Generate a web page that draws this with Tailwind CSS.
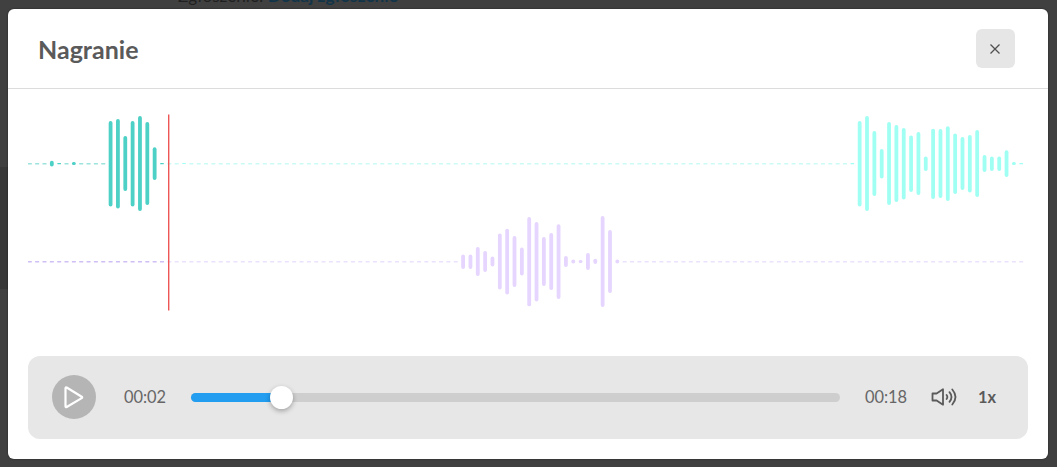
<!DOCTYPE html>
<html lang="pl">
<head>
    <meta charset="UTF-8">
    <meta name="viewport" content="width=device-width, initial-scale=1.0">
    <title>Nagranie</title>
    <script src="https://cdn.jsdelivr.net/npm/@tailwindcss/browser@4"></script>
</head>
<body class="bg-[#404040] font-[Lato,sans-serif] text-[#5a5a5a] overflow-hidden">
    <div class="relative h-[467px] w-[1057px] overflow-hidden">
        <!-- page behind the modal -->
        <div class="absolute left-0 top-[167px] w-2 h-[122px] bg-[#383838]"></div>
        <p class="absolute left-[178px] -top-[14px] text-[17.2px] leading-5 text-[#202020] whitespace-nowrap">Zgłoszenie: <b class="text-[#123448]">Dodaj zgłoszenie</b></p>

        <div class="relative mt-[9px] ml-2 w-[1040px] h-[450px] bg-white rounded-md flex flex-col shadow-[0_0_2px_rgba(0,0,0,0.5)]">
            <header class="h-20 shrink-0 border-b border-[#dcdcdc] flex items-center justify-between pl-[30px] pr-[33px]">
                <h1 class="text-[25px] font-bold pt-[2px]">Nagranie</h1>
                <button class="w-[39px] h-[39px] rounded-md bg-[#e6e6e6] flex items-center justify-center">
                    <svg class="mr-px" width="10" height="10" viewBox="0 0 10 10" stroke="#505050" stroke-width="1.3"><path d="M.5.5l9 9M9.500.5l-9 9"/></svg>
                </button>
            </header>

            <main class="px-5 pt-[25px]">
                <svg id="wave" width="1000" height="198" viewBox="28 114 1000 198" fill="none"></svg>
            </main>

            <footer class="mx-5 mt-auto mb-5 h-[83px] rounded-xl bg-[#e7e7e7] flex items-center pl-6 pr-8 pb-px">
                <button class="w-11 h-11 rounded-full bg-[#b5b5b5] flex items-center justify-center">
                    <svg width="44" height="44" viewBox="0 0 44 44" fill="none" stroke="#fff" stroke-width="2.2" stroke-linejoin="round"><path d="M13.500 13.200v18.100q0 1.300 1.200.7l15-8.900q1-.7 0-1.400l-15-9.200q-1.200-.6-1.200.7z"/></svg>
                </button>
                <span class="ml-7 w-[67px] text-[16.4px] text-[#666] pt-px">00:02</span>
                <div class="relative w-[649px] h-[9px] rounded-full bg-[#cecece]">
                    <div class="h-[9px] rounded-full bg-[#229df0]" style="width: 14%"></div>
                    <div class="absolute left-[79px] -top-[7px] w-[23px] h-[23px] rounded-full bg-white shadow-[0_2px_5px_rgba(0,0,0,0.3)]"></div>
                </div>
                <span class="ml-[25px] w-[66px] text-[16.4px] text-[#666] pt-px">00:18</span>
                <svg width="26" height="18" viewBox="0 0 26 18" fill="none" stroke="#5a5a5a" stroke-width="1.8" stroke-linejoin="round" stroke-linecap="round">
                    <path d="M1.500 5.500H5.600L12 1.300V16.700L5.600 12.500H1.500Z"/>
                    <path d="M15.600 7q1.500 2 0 4M18.500 4.200q4 4.800 0 9.600M21.300 1.500q6.400 7.500 0 15"/>
                </svg>
                <span class="ml-[21px] text-[16.4px] font-bold pt-px">1x</span>
            </footer>
        </div>
    </div>

    <script>
        const wave = document.getElementById('wave');
        const STEP = 7.344;
        const START = 29.8;
        const PLAYHEAD = 168.5;

        // slot index: [top, bottom]
        const client = {
            3: [160.8, 166.5], 4: [163, 164.3], 6: [162, 165],
            11: [121, 206.5], 12: [119, 208.5], 13: [136, 191], 14: [121, 206.5],
            15: [116, 211], 16: [122, 205], 17: [147.3, 180], 18: [163, 164.3], 21: [163, 164],
            112: [163, 164.3], 113: [121, 206.5], 114: [116, 211], 115: [131, 196], 116: [149, 178.5],
            117: [122, 205], 118: [125, 202], 119: [128, 199.5], 120: [135.5, 192], 121: [132, 195],
            122: [156.5, 171], 123: [128.7, 199], 124: [129, 198], 125: [126.3, 201], 126: [133.5, 194],
            127: [137, 190], 128: [135, 192.5], 129: [130, 197], 130: [155, 172], 131: [156.5, 171],
            132: [156.5, 171], 133: [150.3, 177], 134: [162, 165], 135: [163, 164.3],
        };
        const agent = {
            59: [254.5, 269], 60: [254.5, 269], 61: [247, 276], 62: [251, 272], 63: [256.5, 266.5],
            64: [233.5, 289.5], 65: [228.7, 294.5], 66: [236, 287], 67: [247.5, 275.5],
            68: [217, 306.3], 69: [222, 301.5], 70: [237, 286], 71: [233, 290], 72: [224.3, 299],
            73: [256, 267], 74: [259.5, 263.5], 75: [260, 263], 76: [253, 270], 77: [258.7, 264],
            78: [216, 307], 79: [230, 293], 80: [259.5, 263.5],
        };

        function drawTrack(bars, y, played, rest, playedDash, restDash) {
            let out = '';
            for (let i = 0; i < 136; i++) {
                const x = START + i * STEP;
                const before = x < PLAYHEAD;
                if (bars[i]) {
                    const [top, bottom] = bars[i];
                    const h = bottom - top;
                    out += `<rect x="${x - 1.9}" y="${top}" width="3.8" height="${h}" rx="${Math.min(1.9, h / 2)}" fill="${before ? played : rest}"/>`;
                } else {
                    out += `<rect x="${x - 2}" y="${y - 0.5}" width="4" height="1.5" fill="${before ? playedDash : restDash}"/>`;
                }
            }
            return out;
        }

        wave.innerHTML =
            drawTrack(client, 163.5, '#4dd0c5', '#a0fff3', '#9be3dc', '#ccfbf5') +
            drawTrack(agent, 261.5, '#cfbaf5', '#e5d5ff', '#d0bff5', '#ece2fd') +
            `<rect x="168" y="114.5" width="1.4" height="196" fill="#ee5555"/>`;
    </script>
</body>
</html>
